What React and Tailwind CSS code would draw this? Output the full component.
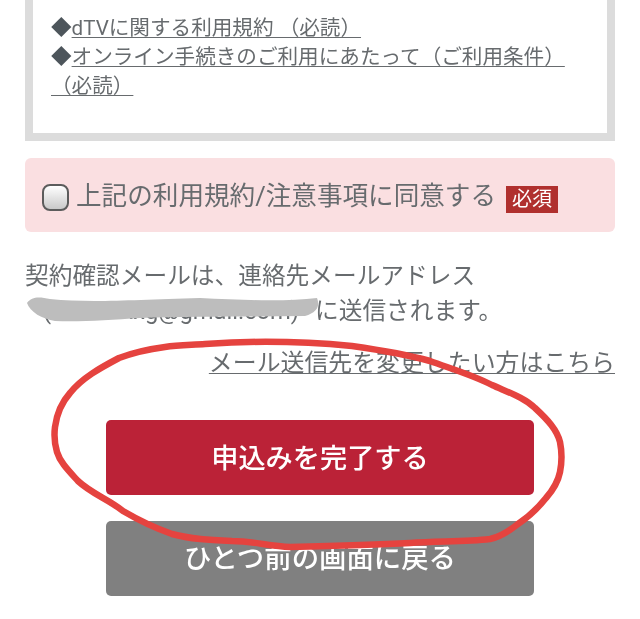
const font = "font-['Roboto','Noto_Sans_CJK_JP',sans-serif]";

function TermLinks() {
    return (
        <div className="border-x-[8px] border-b-[8px] border-[#dcdcdc] bg-white h-[141px] pl-[18px] pr-[30px] pt-[14px] text-[20.6px] leading-[29px] text-[#676b6e]">
            <div>
                <span className="text-[#4d555b]">◆</span>
                <a className="underline underline-offset-[2px] decoration-1">dTVに関する利用規約 （必読）</a>
            </div>
            <div className="whitespace-nowrap">
                <span className="text-[#4d555b]">◆</span>
                <a className="underline underline-offset-[2px] decoration-1">オンライン手続きのご利用にあたって（ご利用条件）</a>
            </div>
            <div>
                <a className="underline underline-offset-[2px] decoration-1">（必読）</a>
            </div>
        </div>
    );
}

function AgreeBox() {
    return (
        <div className="mt-[17px] h-[74px] rounded-[6px] bg-[#fadfe1] flex items-center pl-[17px]">
            <span className="w-[27px] h-[27px] rounded-[8px] border-2 border-[#5c5c5c] bg-gradient-to-b from-white to-[#c9c9c9] shrink-0 mt-[5px]"></span>
            <span className="ml-[7px] mt-[4px] text-[25.6px] leading-none text-[#676b6e] whitespace-nowrap">上記の利用規約/注意事項に同意する</span>
            <span className="ml-[10px] mt-[8px] w-[52px] h-[27px] bg-[#b0302e] text-white text-[20px] leading-[27px] text-center">必須</span>
        </div>
    );
}

function App() {
    return (
        <div className={`relative w-[640px] h-[619px] overflow-hidden bg-white blur-[0.4px] ${font}`}>
            <div className="px-[25px]">
                <TermLinks />
                <AgreeBox />
                <p className="mt-[27px] text-[23.7px] leading-[35px] text-[#676b6e]">
                    契約確認メールは、連絡先メールアドレス
                    <br />
                    <span className="inline-block w-[290px] pl-[18px] whitespace-nowrap overflow-hidden align-bottom">(xxxxxxxxg@gmail.com)</span>に送信されます。
                </p>
                <div className="mt-[17px] text-right">
                    <a className="text-[23.9px] leading-[35px] text-[#676b6e] underline underline-offset-[2px] decoration-1 whitespace-nowrap">メール送信先を変更したい方はこちら</a>
                </div>
                <div className="mt-[39px] flex flex-col items-center gap-[26px]">
                    <button className="w-[428px] h-[75px] pt-[4px] rounded-[5px] bg-[#bb2237] text-white text-[27.2px] font-medium">申込みを完了する</button>
                    <button className="w-[428px] h-[75px] pt-[2px] rounded-[5px] bg-[#808080] text-white text-[27.4px] font-medium">ひとつ前の画面に戻る</button>
                </div>
            </div>

            {/* hand drawn marks on top of the screenshot */}
            <svg className="absolute inset-0 pointer-events-none" width="640" height="619" viewBox="0 0 640 619" fill="none">
                <path d="M27 303C32 296 40 297 50 299C90 303 130 300 200 298C240 300 285 302 317 298C320 305 318 312 305 316C250 317 190 316 140 318C110 320 80 322 55 321C42 319 30 312 27 303Z" fill="#bdbdbd" />
                <path
                    d="M205 344C260 340 310 342 352 346C380 350 405 354 430 361C455 370 475 376 492 385C510 393 525 398 535 408C548 420 557 430 560 442C562 452 562 462 560 472C558 482 553 490 546 498C538 508 530 516 518 524C508 532 500 537 490 539C465 542 440 541 410 543C370 545 330 546 290 547C270 546 250 541 232 541C210 540 190 539 172 534C155 528 140 521 123 511C108 499 92 494 78 481C68 470 60 462 57 452C54 442 54 435 55 427C57 412 62 402 70 393C82 378 100 368 119 358C135 352 150 349 165 347C178 345 192 345 205 344Z"
                    stroke="#e5433f"
                    strokeWidth="6.5"
                    strokeLinejoin="round"
                />
            </svg>
        </div>
    );
}

export default App;
